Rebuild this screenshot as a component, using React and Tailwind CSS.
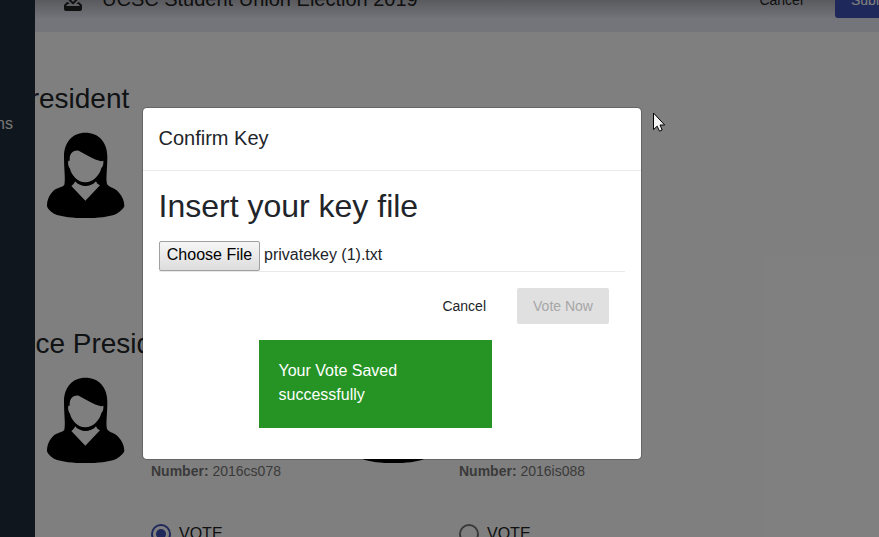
import { MdHowToVote } from "react-icons/md";

function Avatar() {
  return (
    <svg className="h-[86px] w-20 shrink-0" viewBox="138 36 240 258">
      <path
        fill="#000"
        fillRule="evenodd"
        d="M256 38C218 38 192 66 192 110C192 150 197 178 193 194C188 202 170 203 162 211C148 224 141 240 141 258C141 262 148 272 162 281C185 291 220 294 256 294C293 294 328 291 350 281C364 272 373 262 373 258C373 240 364 224 350 211C342 203 326 202 321 192C317 175 322 150 322 110C322 66 296 38 256 38ZM211 105C215 95 225 91 236 92C258 103 280 118 303 124L310 122C311 130 309 140 304 144C299 165 280 187 256 187C233 187 214 165 210 146C205 140 203 130 205 122L209 122C209 115 209 110 211 105ZM225 184C235 194 245 198 256 198C268 198 280 194 288 184C290 190 294 194 300 196L256 242L214 198C219 194 224 190 225 184Z"
      />
    </svg>
  );
}

function Candidate({ number, selected }) {
  return (
    <div className="flex w-[308px] shrink-0">
      <Avatar />
      <div className="ml-[25px] flex flex-col pt-[84px]">
        <p className="text-sm whitespace-nowrap text-[#757575]">
          <b>Number:</b> {number}
        </p>
        <label className="mt-[43px] flex items-center gap-2 text-base leading-5 text-[#212121]">
          <span
            className={
              selected
                ? "flex size-5 items-center justify-center rounded-full border-2 border-[#3f51b5]"
                : "size-5 rounded-full border-2 border-[#757575]"
            }
          >
            {selected && <span className="size-2.5 rounded-full bg-[#3f51b5]" />}
          </span>
          <span className="-mt-px">VOTE</span>
        </label>
      </div>
    </div>
  );
}

function Section({ title, children }) {
  return (
    <section className="flex h-[245px] flex-col">
      <h2 className="-ml-6 text-[28px] leading-8 whitespace-nowrap text-[#212529]">{title}</h2>
      <div className="mt-[17px] ml-[11px] flex">{children}</div>
    </section>
  );
}

function ConfirmDialog() {
  return (
    <div className="mt-[107px] ml-[142px] h-[353px] w-[500px] rounded-[5px] border border-black/20 bg-white bg-clip-padding text-[#212529]">
      <div className="flex h-[63px] items-center border-b border-[#e9ecef] px-[15.5px] pb-0.5">
        <h5 className="text-xl">Confirm Key</h5>
      </div>
      <div className="flex flex-col px-4 pt-4">
        <h2 className="-ml-[0.5px] text-[32px] leading-[38px]">Insert your key file</h2>
        <div className="mt-4 flex h-[31px] items-start border-b border-[#e9e9e9]">
          <button className="h-[30px] w-[101px] rounded-[2px] border border-[#a0a0a0] bg-linear-to-b from-[#f6f6f6] to-[#dddddd] pb-0.5 text-base leading-none text-black">
            Choose File
          </button>
          <span className="ml-1 text-base leading-7">privatekey (1).txt</span>
        </div>
        <div className="mt-4 mr-4 flex h-9 items-center justify-end text-sm">
          <button className="mr-[31px]">Cancel</button>
          <button className="h-9 w-[92px] rounded-[2px] bg-[#e0e0e0] text-[#a6a6a6]">Vote Now</button>
        </div>
        <div className="mt-4 ml-[100px] h-[88px] w-[233px] bg-[#259425] px-[19.5px] pt-[19px] text-base text-white">
          Your Vote Saved
          <br />
          successfully
        </div>
      </div>
    </div>
  );
}

export default function App() {
  return (
    <div className="relative flex h-[537px] w-[879px] overflow-hidden bg-white font-['Liberation_Sans',Arial,sans-serif]">
      <aside className="z-10 w-[35px] shrink-0 overflow-hidden bg-[#1e2c3a] pt-28">
        <span className="-ml-1 block text-base text-[#eeeeee]">ns</span>
      </aside>
      <main className="min-w-0 flex-1">
        <div className="h-8 bg-[#e8eaf6]">
          <header className="relative -top-8 flex h-16 items-center bg-linear-to-b from-[#b4b5bd] from-50% to-[#e8eaf6] to-80% pl-[26px] text-[#212121]">
            <MdHowToVote className="relative top-px size-6" />
            <h1 className="-mt-0.5 ml-[17px] text-xl">UCSC Student Union Election 2019</h1>
            <div className="ml-auto flex items-center text-sm">
              <span className="mr-8">Cancel</span>
              <span className="flex h-9 w-11 items-center overflow-hidden rounded-l-[3px] bg-[#3f51b5] pl-4 text-white">
                Submit
              </span>
            </div>
          </header>
        </div>
        <div className="pt-[51px]">
          <Section title="President">
            <Avatar />
          </Section>
          <Section title="Vice President">
            <Candidate number="2016cs078" selected />
            <Candidate number="2016is088" />
          </Section>
        </div>
      </main>
      <div className="absolute inset-0 z-20 bg-black/50">
        <ConfirmDialog />
      </div>
      <svg className="absolute top-[111px] left-[652px] z-30 h-[22px] w-[15px]" viewBox="0 0 15 22">
        <path
          d="M1.5 2V18.6L5.2 15.2L7.5 20.2L10.2 19L8 14H12.7Z"
          fill="#f4f4f4"
          stroke="#000"
          strokeWidth="1"
        />
      </svg>
    </div>
  );
}
